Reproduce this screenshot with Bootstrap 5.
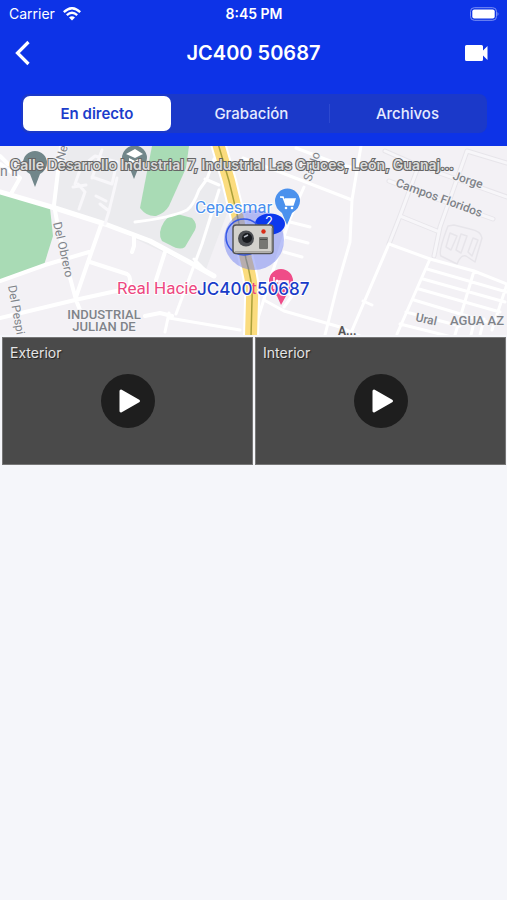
<!DOCTYPE html>
<html lang="es">
<head>
<meta charset="utf-8">
<meta name="viewport" content="width=device-width, initial-scale=1">
<title>JC400 50687</title>
<link href="https://cdn.jsdelivr.net/npm/bootstrap@5.3.0/dist/css/bootstrap.min.css" rel="stylesheet">
<style>
body { font-family: Inter, "Liberation Sans", sans-serif; background: #f5f6fa; }
.app-head { background: #0d33e7; }
.status-line { height: 28px; font-size: 14px; line-height: 28px; padding: 0 8px 0 9px; }
.title-line { height: 50px; padding: 0 15px; }
.title-line h1 { font-size: 20px; line-height: 24px; }
.title-line button { width: 32px; height: 32px; }
.segments { background: #1b39c9; border-radius: 8px; margin: 16px 20px 13px 21px; padding: 2px; height: 39px; }
.segments button { font-size: 15px; line-height: 20px; font-weight: 500; color: #e6eaff; border-radius: 7px; }
.segments button.active { background: #fff; color: #1c3dcb; font-weight: 600; max-width: 32%; margin-right: 3px; }
.segments .divider { width: 1px; background: #2d49d0; margin: 8px 0; }
.map-view svg { display: block; width: 100%; height: auto; }
.address { left: 10px; right: 40px; top: 9px; font-size: 14px; font-weight: 600; line-height: 20px; color: #dcdcdc; -webkit-text-stroke: 2px #666; paint-order: stroke fill; }
.tiles { padding: 2px 1px 2px 2px; gap: 2px; }
.cam { background: #4a4a4a; border: 1px solid #777; height: 128px; }
.cam .cam-name { left: 7px; top: 5px; font-size: 14px; line-height: 20px; color: #e4e4e4; text-shadow: 1px 1px 1px #222; }
.play { width: 54px; height: 54px; background: #1e1e1e; }
</style>
<script src="https://cdn.jsdelivr.net/npm/bootstrap@5.3.0/dist/js/bootstrap.bundle.min.js"></script>
</head>
<body>
<header class="app-head text-white overflow-hidden">
  <div class="status-line row g-0 align-items-center">
    <div class="col d-flex align-items-center gap-2"><span>Carrier</span>
      <svg width="18" height="14" viewBox="0 0 18 14" fill="none" stroke="#fff" stroke-width="2.3" aria-hidden="true"><path d="M.8 5.1Q9-2.7 17.2 5.1M3.8 8.2Q9 3.3 14.2 8.2"/><path d="M6 10.5Q9 7.8 12 10.5L9 13.6Z" fill="#fff" stroke="none"/></svg>
    </div>
    <div class="col-auto fw-semibold">8:45 PM</div>
    <div class="col d-flex justify-content-end">
      <svg width="30" height="14" viewBox="0 0 30 14" aria-hidden="true"><rect x="1.5" y=".7" width="26" height="12.6" rx="3.8" fill="none" stroke="#7c91f4"/><rect x="3.3" y="2.5" width="22.4" height="9" rx="2" fill="#fff"/><path d="M28.500 5q2 2 0 4z" fill="#7c91f4"/></svg>
    </div>
  </div>
  <div class="title-line d-flex align-items-center justify-content-between">
    <button class="btn p-0 border-0 d-flex align-items-center" aria-label="Volver"><svg width="16" height="26" viewBox="0 0 16 26" fill="none" stroke="#fff" stroke-width="3.2"><path d="M13.500 2 2.500 13 13.500 24"/></svg></button>
    <h1 class="m-0 fw-semibold">JC400 50687</h1>
    <button class="btn p-0 border-0 d-flex align-items-center justify-content-end" aria-label="Vídeo"><svg width="27" height="16" viewBox="0 0 27 16" fill="#fff"><path d="M1.5 0H16.500q1.5 0 1.5 1.5V5.500L22.500 1V15L18 10.500V14.500q0 1.500-1.500 1.500H1.500Q0 16 0 14.500V1.500Q0 0 1.500 0Z"/></svg></button>
  </div>
  <nav class="segments d-flex" aria-label="Secciones">
    <button class="btn border-0 p-0 flex-fill w-100 active">En directo</button>
    <button class="btn border-0 p-0 flex-fill w-100">Grabación</button>
    <span class="divider flex-shrink-0"></span>
    <button class="btn border-0 p-0 flex-fill w-100">Archivos</button>
  </nav>
</header>
<main>
<section class="map-view position-relative" aria-label="Mapa">
<svg viewBox="0 146 507 189" font-family="Roboto, sans-serif">
  <rect y="146" width="507" height="189" fill="#f3f1f5"/>
  <path d="M59 146H218L232 200 205 272 104 224 54 208Z" fill="#ebebee"/>
  <g fill="#a9dbb5">
    <path d="M0 193 50 208 53 236 44 265 0 280Z"/>
    <path d="M152 146 140 208Q147 217 156 216 165 213 169 206L186 168 189 146Z"/>
    <path d="M164 222Q170 214 177 214L192 218Q198 224 195 230L185 247Q180 251 170 245L162 241Q157 233 164 222Z"/>
  </g>
  <g fill="none" stroke-linejoin="round" stroke-linecap="round">
    <g stroke="#e7e5ea" stroke-width="5">
      <path d="M417 170 400 216 389 244M467 151 440 227 434 256M400 216 437 231M385 151 417 165 507 197M389 181 437 199 493 219M467 151 507 163"/>
      <path d="M448 226Q438 252 441 256L457 264Q461 254 466 256L475 262 482 238Q481 231 470 229L454 225ZM450 233 457 236 451 250 446 247ZM461 234 467 236 461 253 456 250ZM473 238 478 240 472 256 468 252Z" stroke-width="1.500"/>
    </g>
    <path d="M417 170 400 216 389 244M467 151 440 227 434 256M400 216 437 231M385 151 417 165 507 197M389 181 437 199 493 219M467 151 507 163" stroke="#f7f6f9" stroke-width="3"/>
    <g stroke="#fff" stroke-width="4">
      <path d="M0 192 55 208 105 224 150 241 189 262 214 276" stroke-width="5"/>
      <path d="M61 146 54 205 59 232 68 270 76 300 80 310M101 225 88 262 75 300M0 281 45 265 89 252M0 318 75 300 130 288M90 262 127 274Q131 276 130 286M134 237V246L132 252M165 252 156 280M145 316 160 313 172 316M0 164 20 178 12 192M0 156 8 164"/>
      <path d="M135 222Q170 218 187 210 193 206 199 190L207 179 214 159 221 152M205 179 219 185M219 190 202 244 176 314M169 318 240 330M194 259 204 269M169 313 165 332" stroke-width="3"/>
      <path d="M75 184 81 167 95 156 117 162 112 184 92 177M78 184 85 192 79 209M92 178 102 150M100 204 109 211 117 178M109 211 105 224M73 187 86 185M96 196 106 201" stroke-width="3" stroke="#f8f7fa"/>
      <path d="M243 158 303 181 352 200M296 148 338 164 359 169M361 146 352 200 350 242 337 287 325 335M304 187 289 221 270 280 258 318M290 222 310 227M285 237 308 243M284 252 302 257M264 300 284 311 340 327 362 337M270 292Q280 286 292 296L284 307" stroke-width="3"/>
      <path d="M350 335 389 244 430 259 397 334M430 259 474 271 507 284M427 269 507 292M423 279 505 302M419 289 500 312M414 300 487 322M474 271 455 335M507 284 492 330M406 312 460 326M400 324 452 337M475 318 471 335M484 319 480 335M363 301 372 305" stroke-width="3"/>
    </g>
    <path d="M217 140 229 181 237 214 246 259Q253 284 252 300L251 337" stroke="#fff" stroke-width="16"/>
    <path d="M217 140 229 181 237 214 246 259Q253 284 252 300L251 337" stroke="#fbdc7e" stroke-width="12"/>
    <path d="M217 140 229 181 237 214 246 259Q253 284 252 300L251 337" stroke="#aaa13b" stroke-width="1.500"/>
  </g>
  <path d="M35 187 30 174Q23 170 23 163A12 12 0 0 1 47 163Q47 170 40 174Z" fill="#71868a"/>
  <path d="M134 179 130 169Q122 165 122 158A12 12 0 0 1 147 158Q147 165 138 169Z" fill="#71868a"/>
  <path d="M126 154 135 149 143 154 135 158ZM129 158 135 161 140 158V163H129Z" fill="#fff"/>
  <g font-size="12" fill="#7f8389" stroke="#f5f4f7" stroke-width="2" paint-order="stroke">
    <text x="0" y="176" font-size="14">n ir</text>
    <text transform="translate(53 223) rotate(77)">Del Obrero</text>
    <text transform="translate(8 286) rotate(80)">Del Pespi</text>
    <text transform="translate(311 182) rotate(-72)">Sa Jo</text>
    <text transform="translate(395 186) rotate(20)" font-weight="500">Campos Floridos</text>
    <text transform="translate(452 179) rotate(18)" font-weight="500">Jorge</text>
    <text transform="translate(415 321) rotate(12)" font-weight="500">Ural</text>
    <text transform="translate(64 161) rotate(-75)">Ne</text>
    <text x="104" y="319" text-anchor="middle" font-size="13" font-weight="500">INDUSTRIAL</text>
    <text x="104" y="331" text-anchor="middle" font-size="13" font-weight="500">JULIAN DE</text>
    <text x="450" y="325" font-size="13" font-weight="500">AGUA AZ</text>
    <text x="338" y="335" font-size="12" font-weight="700" fill="#555">A...</text>
  </g>
  <text x="195" y="213" font-size="17" fill="#4a90ee" stroke="#fff" stroke-width="2" paint-order="stroke">Cepesmar</text>
  <text x="117" y="294" font-size="17" fill="#ed4780" stroke="#fff" stroke-width="2" paint-order="stroke">Real Hacie</text>
  <text x="251" y="294" font-size="17" fill="#ed4780">t</text>
  <path d="M287 225 282 213Q275 208 275 201A12.500 12.500 0 0 1 300 201Q300 208 292 213Z" fill="#4b91ed"/>
  <path d="M280 197h3l3 8h7l2-6h-10" fill="#fff" stroke="#fff" stroke-width="1.500"/><circle cx="286" cy="208" r="1.300" fill="#fff"/><circle cx="292" cy="208" r="1.300" fill="#fff"/>
  <path d="M281 305 277 296Q269 289 269 281A12 12 0 0 1 293 281Q293 289 286 296Z" fill="#ef4c88"/>
  <path d="M274 277V289M274 285H288V289M288 285V281H279V285" stroke="#fff" stroke-width="1.500" fill="none"/><circle cx="277" cy="281" r="1.500" fill="#fff"/>
  <circle cx="254" cy="240" r="30" fill="#5c70ef" fill-opacity=".43"/>
  <ellipse cx="270" cy="224" rx="15" ry="10.500" fill="#0c38ed"/>
  <text x="269" y="226" text-anchor="middle" font-family="Inter, sans-serif" font-size="13" fill="#fff">2</text>
  <circle cx="244" cy="237" r="18" fill="#8ea0f0" fill-opacity=".2" stroke="#3457e7" stroke-width="1.500"/>
  <rect x="233" y="225" width="40" height="28.500" rx="3" fill="#d3d1cc" stroke="#555" stroke-width="1.500"/>
  <path d="M235 251.500H271.500V228" fill="none" stroke="#aaa8a4"/>
  <circle cx="246" cy="238.500" r="8" fill="#4c4e52"/><circle cx="247" cy="238" r="5" fill="#181a1e"/><path d="M244 237 248 235" stroke="#b7bcc5" stroke-width="1.500"/>
  <circle cx="263.500" cy="231.500" r="2.200" fill="#d92c16"/><rect x="259" y="237" width="9" height="12" rx="1" fill="#777773"/><path d="M260 239.500h7" stroke="#484946"/>
  <text x="197" y="295" font-family="Inter, sans-serif" font-size="17" font-weight="500" fill="#193cc8" stroke="#fff" stroke-width="2" paint-order="stroke">JC400 50687</text>
</svg>
<div class="address position-absolute text-nowrap">Calle Desarrollo Industrial 7, Industrial Las Cruces, León, Guanaj...</div>
</section>
<section class="tiles d-flex" aria-label="Cámaras">
  <div class="cam position-relative flex-fill w-50 d-flex align-items-center justify-content-center">
    <span class="cam-name position-absolute">Exterior</span>
    <button class="play btn border-0 rounded-circle p-0" aria-label="Reproducir Exterior"><svg width="26" height="26" viewBox="0 0 26 26" fill="#fff" stroke="#fff" stroke-width="3" stroke-linejoin="round"><path d="M6 3 23.500 13 6 23Z"/></svg></button>
  </div>
  <div class="cam position-relative flex-fill w-50 d-flex align-items-center justify-content-center">
    <span class="cam-name position-absolute">Interior</span>
    <button class="play btn border-0 rounded-circle p-0" aria-label="Reproducir Interior"><svg width="26" height="26" viewBox="0 0 26 26" fill="#fff" stroke="#fff" stroke-width="3" stroke-linejoin="round"><path d="M6 3 23.500 13 6 23Z"/></svg></button>
  </div>
</section>
</main>
</body>
</html>
